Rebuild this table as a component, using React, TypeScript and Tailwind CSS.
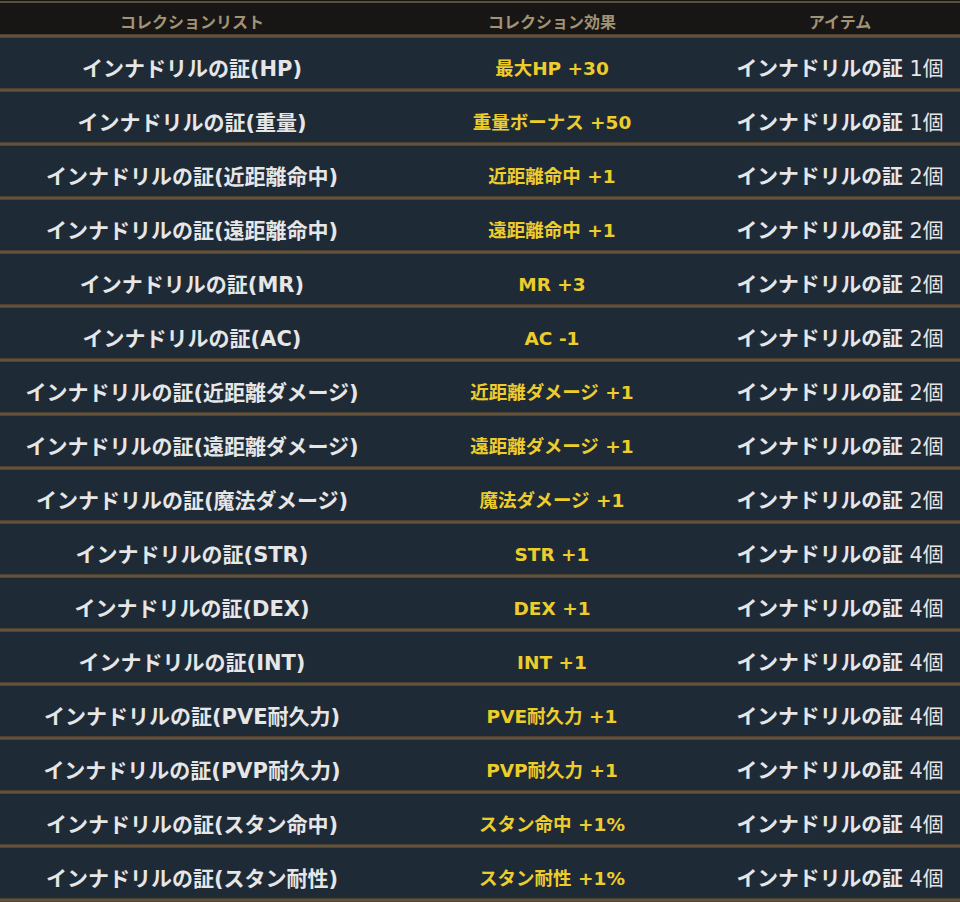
import React from "react";

const rows: [string, string, string][] = [
  ["インナドリルの証(HP)", "最大HP +30", "1個"],
  ["インナドリルの証(重量)", "重量ボーナス +50", "1個"],
  ["インナドリルの証(近距離命中)", "近距離命中 +1", "2個"],
  ["インナドリルの証(遠距離命中)", "遠距離命中 +1", "2個"],
  ["インナドリルの証(MR)", "MR +3", "2個"],
  ["インナドリルの証(AC)", "AC -1", "2個"],
  ["インナドリルの証(近距離ダメージ)", "近距離ダメージ +1", "2個"],
  ["インナドリルの証(遠距離ダメージ)", "遠距離ダメージ +1", "2個"],
  ["インナドリルの証(魔法ダメージ)", "魔法ダメージ +1", "2個"],
  ["インナドリルの証(STR)", "STR +1", "4個"],
  ["インナドリルの証(DEX)", "DEX +1", "4個"],
  ["インナドリルの証(INT)", "INT +1", "4個"],
  ["インナドリルの証(PVE耐久力)", "PVE耐久力 +1", "4個"],
  ["インナドリルの証(PVP耐久力)", "PVP耐久力 +1", "4個"],
  ["インナドリルの証(スタン命中)", "スタン命中 +1%", "4個"],
  ["インナドリルの証(スタン耐性)", "スタン耐性 +1%", "4個"],
];

function Band() {
  return (
    <div className="h-[4px] w-full bg-gradient-to-b from-[#433829] via-[#6b5a44] to-[#4a3d2e]" />
  );
}

export default function App() {
  return (
    <div
      className="w-[960px] h-[902px] bg-[#1f2a37] overflow-hidden"
      style={{ fontFamily: '"DejaVu Sans", "Noto Sans CJK JP", sans-serif' }}
    >
      <div className="h-[1px] bg-[#171615]" />
      <div className="h-[2px] bg-[#5e4f3c]" />
      <div className="h-[31px] bg-[#171615] flex items-center pt-[8px] leading-none text-[16px] font-bold text-[#a39376]">
        <div className="w-[40%] text-center">コレクションリスト</div>
        <div className="w-[35%] text-center">コレクション効果</div>
        <div className="w-[25%] text-center">アイテム</div>
      </div>
      <Band />
      {rows.map(([name, effect, count], i) => (
        <div key={i}>
          <div className="h-[50px] bg-[#1f2a37] flex items-center pt-[12px] leading-none">
            <div className="w-[40%] text-center text-[21px] font-bold text-[#e6e6e6]">
              {name}
            </div>
            <div className="w-[35%] text-center text-[18.5px] font-bold text-[#eccd2c]">
              {effect}
            </div>
            <div className="w-[25%] text-center text-[20.8px] text-[#e6e6e6]">
              <span className="font-bold">インナドリルの証</span>
              <span className="font-normal"> {count}</span>
            </div>
          </div>
          <Band />
        </div>
      ))}
    </div>
  );
}
